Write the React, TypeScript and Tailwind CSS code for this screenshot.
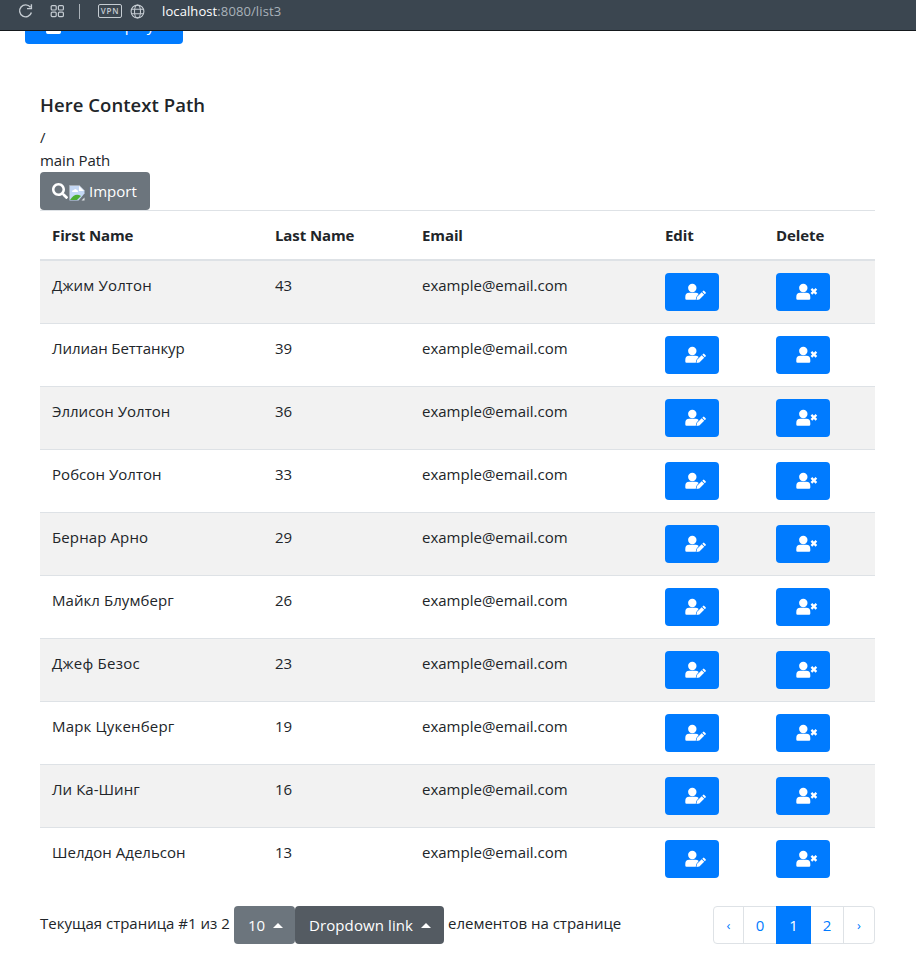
import { FaSearch, FaSquare } from "react-icons/fa";

const people: [string, number, string][] = [
  ["Джим Уолтон", 43, "tracking-[0.16px]"],
  ["Лилиан Беттанкур", 39, "tracking-[-0.08px]"],
  ["Эллисон Уолтон", 36, "tracking-[0px]"],
  ["Робсон Уолтон", 33, "tracking-[0.05px]"],
  ["Бернар Арно", 29, "tracking-[0.12px]"],
  ["Майкл Блумберг", 26, "tracking-[0.06px]"],
  ["Джеф Безос", 23, "tracking-[0.25px]"],
  ["Марк Цукенберг", 19, "tracking-[0.18px]"],
  ["Ли Ка-Шинг", 16, "tracking-[0.05px]"],
  ["Шелдон Адельсон", 13, "tracking-[0.03px]"],
];

const columns = "grid grid-cols-[223px_147px_243px_111px_111px] px-3";

function BrowserBar() {
  return (
    <header className="relative z-10 flex h-[31px] items-center border-b border-[#15191d] bg-[#3b4650] pb-[8px] text-[#c5ccd2]">
      <svg className="ml-[18px]" width="16" height="16" viewBox="0 0 16 16" fill="none" stroke="currentColor" strokeWidth="1.4">
        <path d="M13.4 9.5A6 6 0 1 1 12.4 4.2M13.4 1.2v4.4H9" />
      </svg>
      <svg className="ml-[16px]" width="15" height="14" viewBox="0 0 15 14" fill="none" stroke="currentColor" strokeWidth="1.2">
        <rect x="1.2" y="1.6" width="5" height="4.4" rx="1" />
        <rect x="8.4" y="1.6" width="5" height="4.4" rx="1" />
        <rect x="1.2" y="8.2" width="5" height="4.4" rx="1" />
        <rect x="8.4" y="8.2" width="5" height="4.4" rx="1" />
      </svg>
      <span className="ml-[14px] h-[15px] w-px bg-[#aab2b9]" />
      <span className="ml-[18px] flex h-[14px] w-[24px] items-center justify-center rounded-[2px] border border-[#c5ccd2] text-[8px] font-semibold leading-none tracking-[0.7px]">VPN</span>
      <svg className="ml-[8px]" width="15" height="15" viewBox="0 0 15 15" fill="none" stroke="currentColor" strokeWidth="1.1">
        <circle cx="7.5" cy="7.5" r="6.4" />
        <ellipse cx="7.5" cy="7.5" rx="3" ry="6.4" />
        <path d="M1.6 5.2h11.8M1.6 9.8h11.8" />
      </svg>
      <span className="ml-[17px] text-[13px] leading-4 tracking-[0.1px] text-[#a9b2ba]"><span className="text-white">localhost</span>:8080/list3</span>
    </header>
  );
}

function BrokenImage() {
  return (
    <svg className="ml-px mt-[3px]" width="16" height="16" viewBox="0 0 16 16">
      <path d="M0.5 0.5h10l5 5v3l-6 7h-9z" fill="#c4d8f5" />
      <path d="M0.5 15V0.5h10l5 5" fill="none" stroke="#a5adb6" />
      <path d="M10 1v5h5z" fill="#fff" />
      <path d="M3 7q0-2 2-2 1-2 3 0 1 0 1 2z" fill="#fff" />
      <path d="M1 15q5-8 11-4l-4 4z" fill="#4cae32" />
      <path d="M12.5 15.5l3-3v3z" fill="#dfe4e8" />
    </svg>
  );
}

function Caret() {
  return <span className="ml-2 h-0 w-0 border-x-[5px] border-b-[5px] border-x-transparent border-b-white" />;
}

function UserIcon({ kind }: { kind: "edit" | "remove" }) {
  return (
    <svg width="22" height="18" viewBox="0 0 22 18" fill="#fff">
      <circle cx="7.3" cy="5" r="4.2" />
      {kind === "edit" ? (
        <>
          <path d="M4.2 9.8h6.2q2 0 3.3 1.3l-2.4 2.8-.5 2.8H1.5Q.3 16.7.3 15.4v-1.5q0-4.1 3.9-4.1z" />
          <path d="M11.9 14.1l4.8-4.8 2.5 2.5-4.8 4.8-2.9.3zM17.3 8.7l.8-.8q.6-.6 1.2 0l1.3 1.3q.6.6 0 1.2l-.8.8z" />
        </>
      ) : (
        <>
          <path d="M4.2 9.8h6.2q3.9 0 3.9 4.1v1.5q0 1.3-1.2 1.3H1.5Q.3 16.7.3 15.4v-1.5q0-4.1 3.9-4.1z" />
          <path d="M15.4 5.9l5 5M20.4 5.9l-5 5" stroke="#fff" strokeWidth="2.3" />
        </>
      )}
    </svg>
  );
}

export default function App() {
  return (
    <div className="h-[970px] overflow-hidden whitespace-nowrap bg-white font-['Open_Sans','Noto_Sans',sans-serif] text-[15px] leading-6 text-[#212529]">
      <BrowserBar />
      <div className="-mt-[25px] ml-[25px] flex h-[38px] w-[158px] items-center justify-between rounded-[4px] bg-[#007bff] px-3 text-white">
        <FaSquare className="ml-2 mt-[2px]" size={17} />
        <span>Add Employee</span>
      </div>
      <main className="ml-10 w-[835px] pt-[49px]">
        <h5 className="h-[32px] text-[18.5px] font-semibold leading-6 tracking-[0.05px]">Here Context Path</h5>
        <div className="h-[23px]">/</div>
        <div className="h-[24px] tracking-[-0.1px]">main Path</div>
        <button className="flex h-[38px] w-[110px] items-center rounded-[4px] bg-[#6c757d] pl-3 text-white">
          <FaSearch size={16} />
          <BrokenImage />
          <span className="ml-[4px]">Import</span>
        </button>
        <section>
          <div className={`${columns} h-[51px] border-t border-b-2 border-[#dee2e6] pt-3 font-bold tracking-[-0.1px]`}>
            <span>First Name</span>
            <span>Last Name</span>
            <span>Email</span>
            <span>Edit</span>
            <span>Delete</span>
          </div>
          {people.map(([name, value, spacing]) => (
            <div key={name} className={`${columns} h-[63px] border-t border-[#dee2e6] pt-3 odd:bg-white even:bg-[#f2f2f2] nth-2:h-[62px] nth-2:border-t-0`}>
              <span><span className={spacing}>{name}</span></span>
              <span>{value}</span>
              <span>example@email.com</span>
              <button className="flex h-[38px] w-[54px] items-center rounded-[4px] bg-[#007bff] pl-5 text-white"><UserIcon kind="edit" /></button>
              <button className="flex h-[38px] w-[54px] items-center rounded-[4px] bg-[#007bff] pl-5 text-white"><UserIcon kind="remove" /></button>
            </div>
          ))}
        </section>
        <footer className="mt-4 flex h-[38px] items-center">
          <span className="w-[194px] pb-[4px]">Текущая страница #1 из 2</span>
          <button className="flex h-[38px] w-[61px] items-center rounded-[4px] bg-[#6c757d] pl-[14px] text-white"><span>10</span><Caret /></button>
          <button className="flex h-[38px] w-[149px] items-center rounded-[4px] bg-[#545b62] pl-[14px] text-white"><span className="tracking-[0.1px]">Dropdown link</span><Caret /></button>
          <span className="ml-1 pb-[4px]">елементов на странице</span>
          <nav className="ml-auto flex h-[38px] w-[162px] rounded-[4px] border border-[#dee2e6] text-[#007bff]">
            <span className="flex w-[29px] items-center justify-center text-[13px]">‹</span>
            <span className="flex w-[33px] items-center justify-center border-l border-[#dee2e6]">0</span>
            <span className="-my-px flex w-[35px] items-center justify-center bg-[#007bff] text-white">1</span>
            <span className="flex w-[32px] items-center justify-center">2</span>
            <span className="flex w-[31px] items-center justify-center border-l border-[#dee2e6] text-[13px]">›</span>
          </nav>
        </footer>
      </main>
    </div>
  );
}
